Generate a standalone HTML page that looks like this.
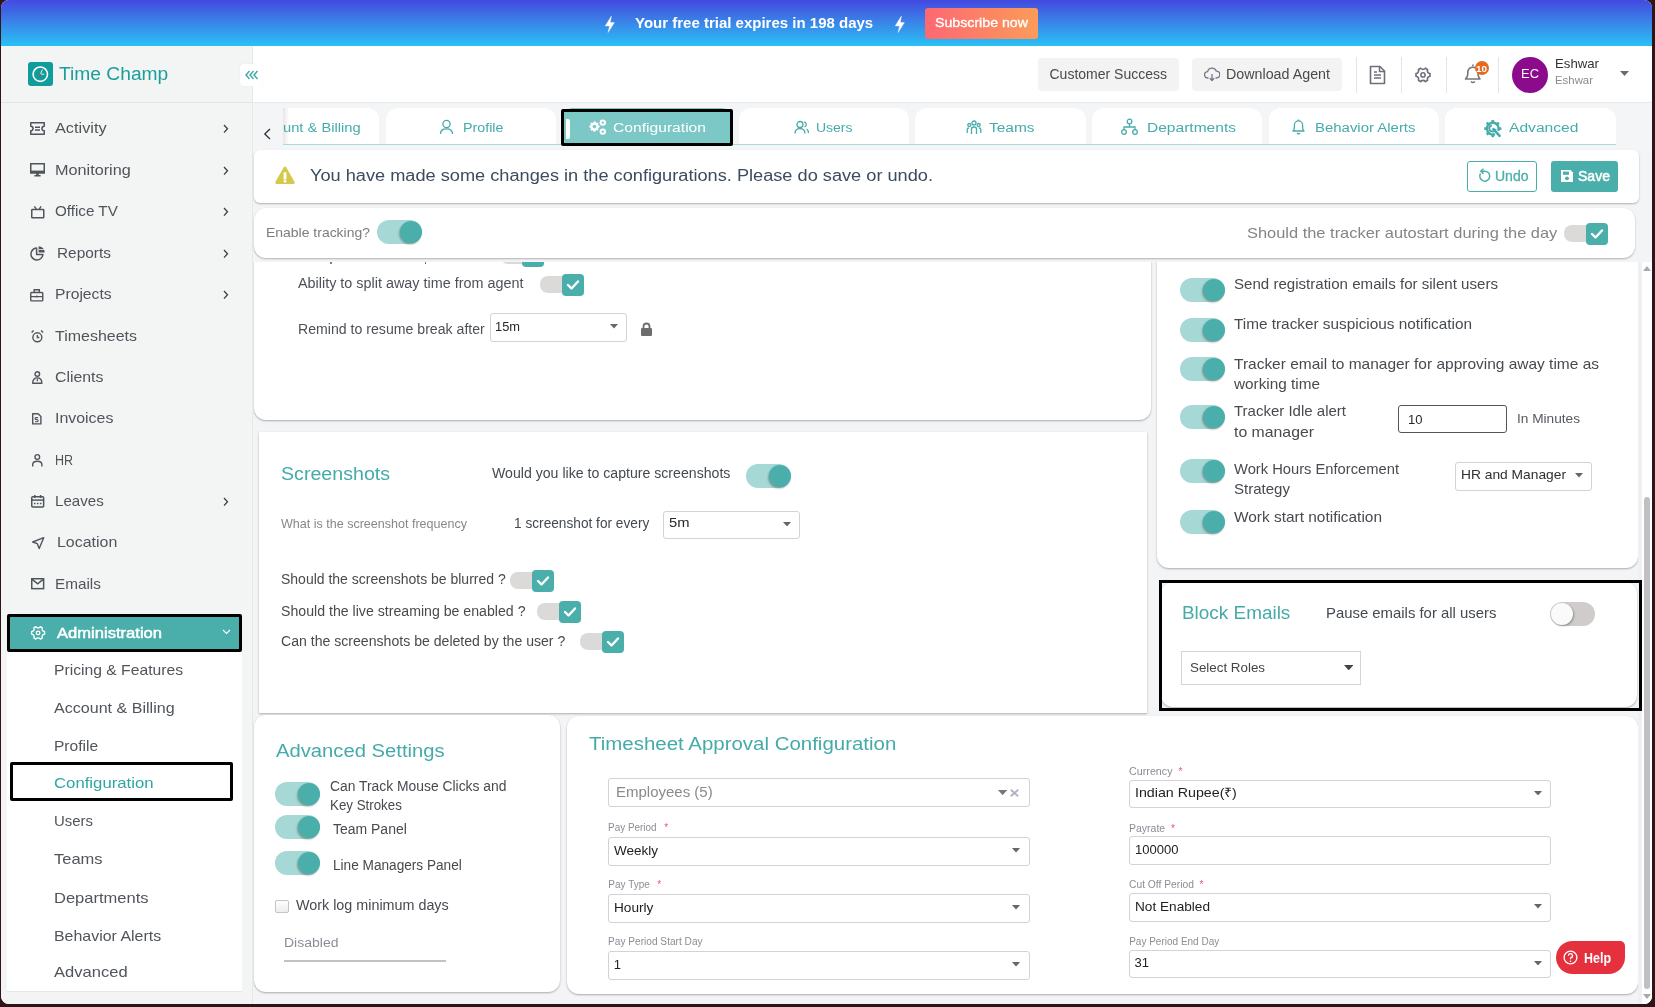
<!DOCTYPE html>
<html><head><meta charset="utf-8"><title>Time Champ - Configuration</title>
<style>
html,body{margin:0;padding:0;width:1655px;height:1007px;overflow:hidden;background:#2f1517;}
body{position:relative;font-family:"Liberation Sans", sans-serif;}
</style></head><body>
<div id="win" style="position:absolute;left:1px;top:0;width:1651px;height:1004px;border-radius:8px;overflow:hidden;background:#f3f4f6;will-change:transform;">
<div style="position:absolute;left:-1px;top:0;width:1655px;height:1007px;">
<div style="position:absolute;left:0px;top:0px;width:1655px;height:46px;background:linear-gradient(180deg,#4349e0 0%,#3a86e8 50%,#29c1f5 100%);"></div>
<svg style="position:absolute;left:604.8px;top:15.5px;" width="10" height="17" viewBox="0 0 10 17" fill="none"><path d="M6.4 0 L0.2 9.9 H4.5 L3.1 16.5 L9.4 6.6 H5.3 Z" fill="#fff" stroke="#fff" stroke-width="0.4" stroke-linejoin="round"/></svg>
<svg style="position:absolute;left:894.5px;top:15.5px;" width="10" height="17" viewBox="0 0 10 17" fill="none"><path d="M6.4 0 L0.2 9.9 H4.5 L3.1 16.5 L9.4 6.6 H5.3 Z" fill="#fff" stroke="#fff" stroke-width="0.4" stroke-linejoin="round"/></svg>
<div id="t0" style="position:absolute;left:635.00px;top:14.60px;font-size:15px;line-height:15px;color:#fff;font-weight:700;letter-spacing:0.000px;white-space:nowrap;">Your free trial expires in 198 days</div>
<div style="position:absolute;left:925px;top:8px;width:113px;height:31px;border-radius:3px;background:linear-gradient(90deg,#fd6873,#fb9b59);"></div>
<div id="t1" style="position:absolute;left:935.00px;top:16.07px;font-size:13.5px;line-height:13.5px;color:#fff;font-weight:400;letter-spacing:0.000px;white-space:nowrap;transform:scaleX(1.0501);transform-origin:0 0;-webkit-text-stroke:0.35px #fff;">Subscribe now</div>
<div style="position:absolute;left:1px;top:46px;width:251px;height:958px;background:#f3f5f5;border-right:1px solid #e6e9ea;"></div>
<div style="position:absolute;left:1px;top:102px;width:251px;height:1px;background:#e3e6e7;"></div>
<div style="position:absolute;left:28px;top:62px;width:25px;height:24px;background:#109c9a;border-radius:3px;"></div>
<svg style="position:absolute;left:28px;top:62px;" width="25" height="24" viewBox="0 0 25 24" fill="none"><circle cx="12.3" cy="12.2" r="7.2" stroke="#fff" stroke-width="1.6"/><path d="M12.3 12.2 L14.4 7.6 M12.3 12.2 L16.2 12.2" stroke="#fff" stroke-width="0.9"/><circle cx="12.2" cy="12.4" r="1" fill="#e33"/></svg>
<div id="t2" style="position:absolute;left:59.20px;top:65.06px;font-size:18px;line-height:18px;color:#1b9e9b;font-weight:400;letter-spacing:0.000px;white-space:nowrap;transform:scaleX(1.0678);transform-origin:0 0;">Time Champ</div>
<div id="t3" style="position:absolute;left:55.30px;top:119.90px;font-size:15px;line-height:15px;color:#50555b;font-weight:400;letter-spacing:0.000px;white-space:nowrap;transform:scaleX(1.0860);transform-origin:0 0;">Activity</div>
<svg style="position:absolute;left:30px;top:122px;overflow:visible;" width="15" height="13" viewBox="0 0 15 13" fill="none"><path d="M0.75 0.75 H14.25 V4.2 A2.3 2.3 0 0 0 14.25 8.8 V12.25 H0.75 V8.8 A2.3 2.3 0 0 0 0.75 4.2 Z" stroke="#50555b" stroke-width="1.5" stroke-linejoin="round"/><path d="M5 5.2 H10 M5 8 H10" stroke="#50555b" stroke-width="1.4"/></svg>
<svg style="position:absolute;left:223px;top:123.6px;" width="6" height="10" viewBox="0 0 6 10" fill="none"><path d="M1 1 L4.5 4.8 L1 8.6" stroke="#3c4046" stroke-width="1.3"/></svg>
<div id="t4" style="position:absolute;left:55.30px;top:161.90px;font-size:15px;line-height:15px;color:#50555b;font-weight:400;letter-spacing:0.000px;white-space:nowrap;transform:scaleX(1.0807);transform-origin:0 0;">Monitoring</div>
<svg style="position:absolute;left:30px;top:163px;overflow:visible;" width="15" height="13.6" viewBox="0 0 15 13.6" fill="none"><rect x="0.75" y="0.75" width="13.5" height="9" stroke="#50555b" stroke-width="1.5"/><rect x="0" y="7.6" width="15" height="2.9" fill="#50555b"/><rect x="6.2" y="10" width="2.6" height="2.2" fill="#50555b"/><rect x="4.3" y="12" width="6.4" height="1.5" rx="0.5" fill="#50555b"/></svg>
<svg style="position:absolute;left:223px;top:165.6px;" width="6" height="10" viewBox="0 0 6 10" fill="none"><path d="M1 1 L4.5 4.8 L1 8.6" stroke="#3c4046" stroke-width="1.3"/></svg>
<div id="t5" style="position:absolute;left:55.30px;top:203.10px;font-size:15px;line-height:15px;color:#50555b;font-weight:400;letter-spacing:0.000px;white-space:nowrap;transform:scaleX(1.0132);transform-origin:0 0;">Office TV</div>
<svg style="position:absolute;left:30.5px;top:206px;overflow:visible;" width="13.5" height="12.5" viewBox="0 0 13.5 12.5" fill="none"><rect x="0.75" y="3.6" width="12" height="8.15" rx="0.6" stroke="#50555b" stroke-width="1.5"/><path d="M3.4 0.4 L5.4 3.4 M10.1 0.4 L8.1 3.4" stroke="#50555b" stroke-width="1.4"/></svg>
<svg style="position:absolute;left:223px;top:206.8px;" width="6" height="10" viewBox="0 0 6 10" fill="none"><path d="M1 1 L4.5 4.8 L1 8.6" stroke="#3c4046" stroke-width="1.3"/></svg>
<div id="t6" style="position:absolute;left:56.60px;top:244.90px;font-size:15px;line-height:15px;color:#50555b;font-weight:400;letter-spacing:0.000px;white-space:nowrap;transform:scaleX(1.0261);transform-origin:0 0;">Reports</div>
<svg style="position:absolute;left:30px;top:245.8px;overflow:visible;" width="15" height="14.2" viewBox="0 0 15 14.2" fill="none"><path d="M6.6 2 A6 6 0 1 0 12.9 8.6 H6.6 Z" stroke="#50555b" stroke-width="1.5" stroke-linejoin="round"/><path d="M8.6 0.3 A6.1 6.1 0 0 1 14.7 6.4 H8.6 Z" fill="#50555b"/><path d="M8.6 3.5 H14.5" stroke="#f3f5f5" stroke-width="0.8"/></svg>
<svg style="position:absolute;left:223px;top:248.60000000000002px;" width="6" height="10" viewBox="0 0 6 10" fill="none"><path d="M1 1 L4.5 4.8 L1 8.6" stroke="#3c4046" stroke-width="1.3"/></svg>
<div id="t7" style="position:absolute;left:55.30px;top:286.10px;font-size:15px;line-height:15px;color:#50555b;font-weight:400;letter-spacing:0.000px;white-space:nowrap;transform:scaleX(1.0445);transform-origin:0 0;">Projects</div>
<svg style="position:absolute;left:30.4px;top:289px;overflow:visible;" width="13.5" height="12.6" viewBox="0 0 13.5 12.6" fill="none"><rect x="0.75" y="3.5" width="12" height="8.35" rx="0.8" stroke="#50555b" stroke-width="1.4"/><path d="M4.2 3.5 V0.75 H9.3 V3.5 M0.75 7.6 H12.75" stroke="#50555b" stroke-width="1.4"/><path d="M6.75 6.6 V8.4" stroke="#50555b" stroke-width="1.2"/></svg>
<svg style="position:absolute;left:223px;top:289.8px;" width="6" height="10" viewBox="0 0 6 10" fill="none"><path d="M1 1 L4.5 4.8 L1 8.6" stroke="#3c4046" stroke-width="1.3"/></svg>
<div id="t8" style="position:absolute;left:55.30px;top:327.50px;font-size:15px;line-height:15px;color:#50555b;font-weight:400;letter-spacing:0.000px;white-space:nowrap;transform:scaleX(1.0652);transform-origin:0 0;">Timesheets</div>
<svg style="position:absolute;left:30.7px;top:329.8px;overflow:visible;" width="12.7" height="12.5" viewBox="0 0 12.7 12.5" fill="none"><circle cx="6.35" cy="7.3" r="4.5" stroke="#50555b" stroke-width="1.4"/><path d="M6.35 4.9 V7.5 H8.3" stroke="#50555b" stroke-width="1.4"/><path d="M0.6 2.6 L2.6 0.6 M12.1 2.6 L10.1 0.6" stroke="#50555b" stroke-width="1.4"/></svg>
<div id="t9" style="position:absolute;left:55.30px;top:368.90px;font-size:15px;line-height:15px;color:#50555b;font-weight:400;letter-spacing:0.000px;white-space:nowrap;transform:scaleX(1.0554);transform-origin:0 0;">Clients</div>
<svg style="position:absolute;left:31.8px;top:371px;overflow:visible;" width="10.6" height="12.9" viewBox="0 0 10.6 12.9" fill="none"><circle cx="5.3" cy="3" r="2.3" stroke="#50555b" stroke-width="1.4"/><path d="M0.7 12.2 Q0.8 6.9 5.3 6.9 Q9.8 6.9 9.9 12.2 Z" stroke="#50555b" stroke-width="1.4" stroke-linejoin="round"/><path d="M5.3 7 L4.4 9.6 L5.3 10.6 L6.2 9.6 Z" fill="#50555b"/></svg>
<div id="t10" style="position:absolute;left:55.30px;top:410.10px;font-size:15px;line-height:15px;color:#50555b;font-weight:400;letter-spacing:0.000px;white-space:nowrap;transform:scaleX(1.0612);transform-origin:0 0;">Invoices</div>
<svg style="position:absolute;left:32.3px;top:413.3px;overflow:visible;" width="9.6" height="11.6" viewBox="0 0 9.6 11.6" fill="none"><path d="M0.7 0.7 H6.1 L8.9 3.4 V10.9 H0.7 Z" stroke="#50555b" stroke-width="1.4" stroke-linejoin="round"/><path d="M6.1 4.6 H4.1 Q3 4.6 3 5.6 Q3 6.6 4.6 6.6 Q6.2 6.6 6.2 7.6 Q6.2 8.7 5.1 8.7 H3" stroke="#50555b" stroke-width="1.1"/></svg>
<div id="t11" style="position:absolute;left:55.30px;top:451.50px;font-size:15px;line-height:15px;color:#50555b;font-weight:400;letter-spacing:0.000px;white-space:nowrap;transform:scaleX(0.8352);transform-origin:0 0;">HR</div>
<svg style="position:absolute;left:31.8px;top:454px;overflow:visible;" width="10.6" height="12.4" viewBox="0 0 10.6 12.4" fill="none"><circle cx="5.3" cy="3" r="2.35" stroke="#50555b" stroke-width="1.4"/><path d="M0.7 12.4 V10.6 Q0.7 7.3 5.3 7.3 Q9.9 7.3 9.9 10.6 V12.4" stroke="#50555b" stroke-width="1.4"/></svg>
<div id="t12" style="position:absolute;left:55.30px;top:492.90px;font-size:15px;line-height:15px;color:#50555b;font-weight:400;letter-spacing:0.000px;white-space:nowrap;transform:scaleX(1.0067);transform-origin:0 0;">Leaves</div>
<svg style="position:absolute;left:30.6px;top:494.9px;overflow:visible;" width="13.4" height="12.8" viewBox="0 0 13.4 12.8" fill="none"><rect x="0.75" y="1.8" width="11.9" height="10.25" rx="1" stroke="#50555b" stroke-width="1.5"/><path d="M0.75 5.1 H12.65" stroke="#50555b" stroke-width="1.5"/><path d="M3.8 0 V3 M9.6 0 V3" stroke="#50555b" stroke-width="1.5"/><path d="M2.9 8.4 H4.5 M5.9 8.4 H7.5 M8.9 8.4 H10.5" stroke="#50555b" stroke-width="1.5"/></svg>
<svg style="position:absolute;left:223px;top:496.6px;" width="6" height="10" viewBox="0 0 6 10" fill="none"><path d="M1 1 L4.5 4.8 L1 8.6" stroke="#3c4046" stroke-width="1.3"/></svg>
<div id="t13" style="position:absolute;left:57.10px;top:534.30px;font-size:15px;line-height:15px;color:#50555b;font-weight:400;letter-spacing:0.000px;white-space:nowrap;transform:scaleX(1.0631);transform-origin:0 0;">Location</div>
<svg style="position:absolute;left:32.1px;top:536.9px;overflow:visible;" width="12.4" height="12.2" viewBox="0 0 12.4 12.2" fill="none"><path d="M11.7 0.7 L0.7 5 L5.3 6.7 L7.2 11.5 Z" stroke="#50555b" stroke-width="1.4" stroke-linejoin="round"/></svg>
<div id="t14" style="position:absolute;left:55.30px;top:575.90px;font-size:15px;line-height:15px;color:#50555b;font-weight:400;letter-spacing:0.000px;white-space:nowrap;transform:scaleX(1.0196);transform-origin:0 0;">Emails</div>
<svg style="position:absolute;left:30.6px;top:578.2px;overflow:visible;" width="13.4" height="11.4" viewBox="0 0 13.4 11.4" fill="none"><rect x="0.75" y="0.75" width="11.9" height="9.9" stroke="#50555b" stroke-width="1.5"/><path d="M0.9 1.1 L6.7 5.9 L12.5 1.1" stroke="#50555b" stroke-width="1.5"/></svg>
<div style="position:absolute;left:7px;top:652px;width:235px;height:339px;background:#fff;border-bottom:1px solid #e5e8ea;"></div>
<div style="position:absolute;left:7px;top:614px;width:235px;height:38px;background:#4aafab;box-sizing:border-box;border:3px solid #000;border-radius:2px;"></div>
<svg style="position:absolute;left:30px;top:625px;overflow:visible;" width="17" height="16" viewBox="0 0 17 16" fill="none"><path d="M14.60 6.75 L14.60 9.05 Q11.30 9.75 12.34 12.96 L10.36 14.10 Q8.10 11.60 5.84 14.10 L3.86 12.96 Q4.90 9.75 1.60 9.05 L1.60 6.75 Q4.90 6.05 3.86 2.84 L5.84 1.70 Q8.10 4.20 10.36 1.70 L12.34 2.84 Q11.30 6.05 14.60 6.75 Z" stroke="#fff" stroke-width="1.35" stroke-linejoin="round"/><circle cx="8.1" cy="7.9" r="1.8" stroke="#fff" stroke-width="1.3"/></svg>
<div id="t15" style="position:absolute;left:57.00px;top:624.50px;font-size:15px;line-height:15px;color:#fff;font-weight:400;letter-spacing:0.000px;white-space:nowrap;transform:scaleX(1.1047);transform-origin:0 0;-webkit-text-stroke:0.5px #fff;">Administration</div>
<svg style="position:absolute;left:222px;top:629px;" width="9" height="6" viewBox="0 0 9 6" fill="none"><path d="M1 1 L4.5 4.5 L8 1" stroke="#fff" stroke-width="1.1"/></svg>
<div id="t16" style="position:absolute;left:54.00px;top:662.30px;font-size:15px;line-height:15px;color:#50555b;font-weight:400;letter-spacing:0.000px;white-space:nowrap;transform:scaleX(1.0455);transform-origin:0 0;">Pricing &amp; Features</div>
<div id="t17" style="position:absolute;left:54.00px;top:700.30px;font-size:15px;line-height:15px;color:#50555b;font-weight:400;letter-spacing:0.000px;white-space:nowrap;transform:scaleX(1.0714);transform-origin:0 0;">Account &amp; Billing</div>
<div id="t18" style="position:absolute;left:54.00px;top:738.00px;font-size:15px;line-height:15px;color:#50555b;font-weight:400;letter-spacing:0.000px;white-space:nowrap;transform:scaleX(1.0369);transform-origin:0 0;">Profile</div>
<div id="t19" style="position:absolute;left:54.00px;top:775.30px;font-size:15px;line-height:15px;color:#2ea6a2;font-weight:400;letter-spacing:0.000px;white-space:nowrap;transform:scaleX(1.1162);transform-origin:0 0;">Configuration</div>
<div id="t20" style="position:absolute;left:54.00px;top:813.30px;font-size:15px;line-height:15px;color:#50555b;font-weight:400;letter-spacing:0.000px;white-space:nowrap;transform:scaleX(0.9956);transform-origin:0 0;">Users</div>
<div id="t21" style="position:absolute;left:54.00px;top:851.30px;font-size:15px;line-height:15px;color:#50555b;font-weight:400;letter-spacing:0.000px;white-space:nowrap;transform:scaleX(1.0999);transform-origin:0 0;">Teams</div>
<div id="t22" style="position:absolute;left:54.00px;top:889.50px;font-size:15px;line-height:15px;color:#50555b;font-weight:400;letter-spacing:0.000px;white-space:nowrap;transform:scaleX(1.1016);transform-origin:0 0;">Departments</div>
<div id="t23" style="position:absolute;left:54.00px;top:927.70px;font-size:15px;line-height:15px;color:#50555b;font-weight:400;letter-spacing:0.000px;white-space:nowrap;transform:scaleX(1.0615);transform-origin:0 0;">Behavior Alerts</div>
<div id="t24" style="position:absolute;left:54.00px;top:964.10px;font-size:15px;line-height:15px;color:#50555b;font-weight:400;letter-spacing:0.000px;white-space:nowrap;transform:scaleX(1.1031);transform-origin:0 0;">Advanced</div>
<div style="position:absolute;left:10px;top:762px;width:223px;height:39px;box-sizing:border-box;border:3px solid #000;border-radius:2px;"></div>
<div style="position:absolute;left:253px;top:46px;width:1399px;height:57px;background:#fff;border-bottom:1px solid #e7e9eb;box-sizing:border-box;"></div>
<div style="position:absolute;left:1038px;top:58px;width:141px;height:33px;background:#f3f3f3;border-radius:4px;"></div>
<div id="t25" style="position:absolute;left:1049.50px;top:66.65px;font-size:14px;line-height:14px;color:#4a4a4a;font-weight:400;letter-spacing:0.000px;white-space:nowrap;">Customer Success</div>
<div style="position:absolute;left:1192px;top:58px;width:150px;height:33px;background:#f3f3f3;border-radius:4px;"></div>
<svg style="position:absolute;left:1204px;top:66px;" width="16" height="16" viewBox="0 0 16 16" fill="none"><path d="M4.5 12 H3.8 A3.2 3.2 0 0 1 3.6 5.6 A4.6 4.6 0 0 1 12.4 5.2 A3.4 3.4 0 0 1 12.4 12 H11.5" stroke="#767888" stroke-width="1.3"/><path d="M8 8 V14.5 M5.8 12.3 L8 14.5 L10.2 12.3" stroke="#767888" stroke-width="1.3"/></svg>
<div id="t26" style="position:absolute;left:1225.50px;top:66.65px;font-size:14px;line-height:14px;color:#4a4a4a;font-weight:400;letter-spacing:0.000px;white-space:nowrap;transform:scaleX(1.0199);transform-origin:0 0;">Download Agent</div>
<div style="position:absolute;left:1356px;top:57px;width:1px;height:36px;background:#e2e4e6;"></div>
<div style="position:absolute;left:1401px;top:57px;width:1px;height:36px;background:#e2e4e6;"></div>
<div style="position:absolute;left:1446px;top:57px;width:1px;height:36px;background:#e2e4e6;"></div>
<div style="position:absolute;left:1498px;top:57px;width:1px;height:36px;background:#e2e4e6;"></div>
<svg style="position:absolute;left:1368px;top:65px;" width="20" height="20" viewBox="0 0 20 20" fill="none"><path d="M2.5 1.5 H12 L16.5 6 V18.5 H2.5 Z" stroke="#6f6f7a" stroke-width="1.6" stroke-linejoin="round"/><path d="M11.5 1.5 V6.5 H16.5 M6 10 H13 M6 13 H13 M6 7 H9" stroke="#6f6f7a" stroke-width="1.5"/></svg>
<svg style="position:absolute;left:1412px;top:64px;overflow:visible;" width="22" height="22" viewBox="0 0 22 22" fill="none"><path d="M17.99 9.67 L17.99 12.13 Q14.64 13.00 15.56 16.34 L13.43 17.57 Q11.00 15.10 8.57 17.57 L6.44 16.34 Q7.36 13.00 4.01 12.13 L4.01 9.67 Q7.36 8.80 6.44 5.46 L8.57 4.23 Q11.00 6.70 13.43 4.23 L15.56 5.46 Q14.64 8.80 17.99 9.67 Z" stroke="#707080" stroke-width="1.7" stroke-linejoin="round"/><circle cx="11" cy="10.9" r="2.1" stroke="#707080" stroke-width="1.6"/></svg>
<svg style="position:absolute;left:1462px;top:62px;" width="22" height="24" viewBox="0 0 22 24" fill="none"><path d="M3.5 17 H18 Q16 15 16 12 V9.5 A5.2 5.2 0 0 0 5.8 9.5 V12 Q5.8 15 3.5 17 Z" stroke="#75757d" stroke-width="1.6" stroke-linejoin="round"/><path d="M9 19.5 Q10.9 21.5 12.8 19.5" stroke="#75757d" stroke-width="1.6"/><path d="M10.9 2.5 V4.3" stroke="#75757d" stroke-width="1.6"/></svg>
<div style="position:absolute;left:1475px;top:61px;width:14px;height:14px;background:#e26b1f;border-radius:50%;"></div>
<div id="t27" style="position:absolute;left:1476.20px;top:63.76px;font-size:9.5px;line-height:9.5px;color:#fff;font-weight:700;letter-spacing:0.000px;white-space:nowrap;transform:scaleX(1.0399);transform-origin:0 0;">10</div>
<div style="position:absolute;left:1512px;top:57px;width:36px;height:36px;background:#8c0a8c;border-radius:50%;"></div>
<div id="t28" style="position:absolute;left:1521.00px;top:68.42px;font-size:12.5px;line-height:12.5px;color:#fff;font-weight:400;letter-spacing:0.000px;white-space:nowrap;transform:scaleX(1.0360);transform-origin:0 0;">EC</div>
<div id="t29" style="position:absolute;left:1555.00px;top:56.80px;font-size:13px;line-height:13px;color:#333;font-weight:400;letter-spacing:0.000px;white-space:nowrap;transform:scaleX(1.0148);transform-origin:0 0;">Eshwar</div>
<div id="t30" style="position:absolute;left:1555.00px;top:74.87px;font-size:11.5px;line-height:11.5px;color:#8a8a92;font-weight:400;letter-spacing:0.000px;white-space:nowrap;transform:scaleX(0.9906);transform-origin:0 0;">Eshwar</div>
<svg style="position:absolute;left:1620px;top:71px;" width="9" height="5" viewBox="0 0 9 5" fill="none"><path d="M0 0 H9 L4.5 5 Z" fill="#6b6b73"/></svg>
<div style="position:absolute;left:240px;top:64px;width:23px;height:22px;background:#fff;border-radius:4px;box-shadow:0 0 2px rgba(0,0,0,.06);"></div>
<svg style="position:absolute;left:245px;top:70px;" width="14" height="10" viewBox="0 0 14 10" fill="none"><path d="M4.5 1 L1 5 L4.5 9 M8.5 1 L5 5 L8.5 9 M12.5 1 L9 5 L12.5 9" stroke="#3aa7a4" stroke-width="1.4"/></svg>
<div style="position:absolute;left:253px;top:103px;width:1399px;height:47px;background:#f3f5f6;"></div>
<svg style="position:absolute;left:263px;top:128px;" width="9" height="12" viewBox="0 0 9 12" fill="none"><path d="M7 1 L1.8 6 L7 11" stroke="#333" stroke-width="1.3"/></svg>
<div style="position:absolute;left:283px;top:103px;width:1360px;height:45px;overflow:hidden;"><div style="position:absolute;left:-283px;top:-103px;width:1655px;height:200px;">
<div style="position:absolute;left:208.9px;top:108px;width:170.5px;height:36px;background:#fff;border-radius:12px 12px 0 0;"></div>
<div style="position:absolute;left:385.5px;top:108px;width:170.5px;height:36px;background:#fff;border-radius:12px 12px 0 0;"></div>
<div style="position:absolute;left:738.7px;top:108px;width:170.5px;height:36px;background:#fff;border-radius:12px 12px 0 0;"></div>
<div style="position:absolute;left:915.3px;top:108px;width:170.5px;height:36px;background:#fff;border-radius:12px 12px 0 0;"></div>
<div style="position:absolute;left:1091.9px;top:108px;width:170.5px;height:36px;background:#fff;border-radius:12px 12px 0 0;"></div>
<div style="position:absolute;left:1268.5px;top:108px;width:170.5px;height:36px;background:#fff;border-radius:12px 12px 0 0;"></div>
<div style="position:absolute;left:1445.1px;top:108px;width:170.5px;height:36px;background:#fff;border-radius:12px 12px 0 0;"></div>
<div style="position:absolute;left:283px;top:144px;width:1333px;height:1px;background:#a9dbd8;"></div>
</div></div>
<div style="position:absolute;left:283px;top:108px;width:6px;height:36px;background:linear-gradient(90deg,rgba(0,0,0,.10),rgba(0,0,0,0));"></div>
<div id="t31" style="position:absolute;left:283.00px;top:120.60px;font-size:13.7px;line-height:13.7px;color:#45aca9;font-weight:400;letter-spacing:0.000px;white-space:nowrap;transform:scaleX(1.0750);transform-origin:0 0;">unt &amp; Billing</div>
<div id="t32" style="position:absolute;left:462.60px;top:120.90px;font-size:13.7px;line-height:13.7px;color:#45aca9;font-weight:400;letter-spacing:0.000px;white-space:nowrap;transform:scaleX(1.0413);transform-origin:0 0;">Profile</div>
<svg style="position:absolute;left:439px;top:119px;" width="15" height="16" viewBox="0 0 15 16" fill="none"><circle cx="7.5" cy="5" r="3.6" stroke="#45aca9" stroke-width="1.3"/><path d="M1.5 15 Q1.5 9.8 7.5 9.8 Q13.5 9.8 13.5 15" stroke="#45aca9" stroke-width="1.3"/></svg>
<div style="position:absolute;left:561px;top:108px;width:172px;height:37px;background:#7cc8c6;border-radius:12px 12px 0 0;"></div>
<div style="position:absolute;left:561px;top:109px;width:172px;height:37px;background:#7cc8c6;box-sizing:border-box;border:3px solid #000;border-radius:2px;"></div>
<div style="position:absolute;left:565.5px;top:119px;width:4px;height:20px;background:#fff;border-radius:0 2px 2px 0;"></div>
<svg style="position:absolute;left:587px;top:118px;" width="21" height="18" viewBox="0 0 21 18" fill="none"><g fill="#fff"><path d="M7 3.2 L8.6 3.5 L9 5 L10.4 4.4 L11.6 5.5 L11 7 L12.5 7.6 L12.6 9.2 L11.1 9.9 L11.6 11.4 L10.5 12.6 L9 12 L8.3 13.5 L6.7 13.7 L6 12.2 L4.5 12.7 L3.4 11.6 L3.9 10.1 L2.4 9.4 L2.3 7.8 L3.8 7.2 L3.3 5.7 L4.4 4.5 L5.9 5.1 Z"/><circle cx="15.8" cy="4.6" r="3.2"/><circle cx="15.8" cy="13.6" r="3.2"/></g><circle cx="7.4" cy="8.6" r="1.8" fill="#7cc8c6"/><circle cx="15.8" cy="4.6" r="1.2" fill="#7cc8c6"/><circle cx="15.8" cy="13.6" r="1.2" fill="#7cc8c6"/></svg>
<div id="t33" style="position:absolute;left:613.00px;top:120.90px;font-size:13.7px;line-height:13.7px;color:#fff;font-weight:400;letter-spacing:0.000px;white-space:nowrap;transform:scaleX(1.1422);transform-origin:0 0;">Configuration</div>
<div id="t34" style="position:absolute;left:816.00px;top:120.90px;font-size:13.7px;line-height:13.7px;color:#45aca9;font-weight:400;letter-spacing:0.000px;white-space:nowrap;transform:scaleX(1.0210);transform-origin:0 0;">Users</div>
<svg style="position:absolute;left:794px;top:120px;" width="15" height="15" viewBox="0 0 15 15" fill="none"><circle cx="6" cy="4.5" r="3" stroke="#45aca9" stroke-width="1.3"/><path d="M1 13.5 Q1 8.6 6 8.6 Q11 8.6 11 13.5 M10 1.8 A2.7 2.7 0 0 1 10.5 7 M12.5 9 Q14.5 10 14.5 13" stroke="#45aca9" stroke-width="1.3"/></svg>
<div id="t35" style="position:absolute;left:989.00px;top:120.90px;font-size:13.7px;line-height:13.7px;color:#45aca9;font-weight:400;letter-spacing:0.000px;white-space:nowrap;transform:scaleX(1.1307);transform-origin:0 0;">Teams</div>
<svg style="position:absolute;left:966px;top:119px;" width="16" height="16" viewBox="0 0 16 16" fill="none"><circle cx="8" cy="4" r="2" stroke="#45aca9" stroke-width="1.3"/><circle cx="3.3" cy="6" r="1.5" stroke="#45aca9" stroke-width="1.3"/><circle cx="12.7" cy="6" r="1.5" stroke="#45aca9" stroke-width="1.3"/><path d="M5.5 15 V10 Q5.5 8 8 8 Q10.5 8 10.5 10 V15 M1.2 14 V10.5 Q1.2 9 3 9 M14.8 14 V10.5 Q14.8 9 13 9" stroke="#45aca9" stroke-width="1.3"/></svg>
<div id="t36" style="position:absolute;left:1147.00px;top:120.90px;font-size:13.7px;line-height:13.7px;color:#45aca9;font-weight:400;letter-spacing:0.000px;white-space:nowrap;transform:scaleX(1.1358);transform-origin:0 0;">Departments</div>
<svg style="position:absolute;left:1121px;top:118px;" width="17" height="17" viewBox="0 0 17 17" fill="none"><circle cx="8.5" cy="3.5" r="2.3" stroke="#45aca9" stroke-width="1.3"/><circle cx="3" cy="14" r="2.3" stroke="#45aca9" stroke-width="1.3"/><circle cx="14" cy="14" r="2.3" stroke="#45aca9" stroke-width="1.3"/><path d="M8.5 6 V9 M3 11.7 V9 H14 V11.7" stroke="#45aca9" stroke-width="1.3"/></svg>
<div id="t37" style="position:absolute;left:1315.00px;top:120.90px;font-size:13.7px;line-height:13.7px;color:#45aca9;font-weight:400;letter-spacing:0.000px;white-space:nowrap;transform:scaleX(1.0916);transform-origin:0 0;">Behavior Alerts</div>
<svg style="position:absolute;left:1291px;top:118px;" width="15" height="17" viewBox="0 0 15 17" fill="none"><path d="M2 13 H13 Q11.6 11.5 11.6 9.5 V7 A4.1 4.1 0 0 0 3.4 7 V9.5 Q3.4 11.5 2 13 Z" stroke="#45aca9" stroke-width="1.3" stroke-linejoin="round"/><path d="M6 15 Q7.5 16.5 9 15 M7.5 1.5 V2.8" stroke="#45aca9" stroke-width="1.3"/></svg>
<div id="t38" style="position:absolute;left:1509.00px;top:120.90px;font-size:13.7px;line-height:13.7px;color:#45aca9;font-weight:400;letter-spacing:0.000px;white-space:nowrap;transform:scaleX(1.1397);transform-origin:0 0;">Advanced</div>
<svg style="position:absolute;left:1484px;top:119.5px;overflow:visible;" width="18" height="18" viewBox="0 0 18 18" fill="none"><path d="M11.01 14.07 A5.9 5.9 0 1 1 14.27 10.81" stroke="#45aca9" stroke-width="2.3"/><rect x="14.80" y="7.30" width="2.6" height="2.6" rx="0.4" transform="rotate(0 16.10 8.60)" fill="#45aca9"/><rect x="7.50" y="14.60" width="2.6" height="2.6" rx="0.4" transform="rotate(90 8.80 15.90)" fill="#45aca9"/><rect x="2.34" y="12.46" width="2.6" height="2.6" rx="0.4" transform="rotate(135 3.64 13.76)" fill="#45aca9"/><rect x="0.20" y="7.30" width="2.6" height="2.6" rx="0.4" transform="rotate(180 1.50 8.60)" fill="#45aca9"/><rect x="2.34" y="2.14" width="2.6" height="2.6" rx="0.4" transform="rotate(225 3.64 3.44)" fill="#45aca9"/><rect x="7.50" y="-0.00" width="2.6" height="2.6" rx="0.4" transform="rotate(270 8.80 1.30)" fill="#45aca9"/><rect x="12.66" y="2.14" width="2.6" height="2.6" rx="0.4" transform="rotate(315 13.96 3.44)" fill="#45aca9"/><path d="M9.40 9.20 L15.6 15.8" stroke="#45aca9" stroke-width="2.6" stroke-linecap="round"/><path d="M7.9 5.2 A3.2 3.2 0 1 0 11.6 8.9" stroke="#45aca9" stroke-width="1.9"/></svg>
<div style="position:absolute;left:254px;top:150px;width:1385px;height:53px;background:#fff;border-radius:6px;box-shadow:0 1px 2px rgba(0,0,0,.28);"></div>
<svg style="position:absolute;left:275px;top:166px;" width="20" height="18" viewBox="0 0 20 18" fill="none"><path d="M10 0.6 Q10.9 0.6 11.4 1.5 L19.6 15.9 Q20.2 17.9 18.4 17.9 H1.6 Q-0.2 17.9 0.4 15.9 L8.6 1.5 Q9.1 0.6 10 0.6 Z" fill="#d5c94b"/><rect x="8.6" y="6.2" width="2.8" height="7.4" rx="0.5" fill="#fff"/><circle cx="10" cy="15.3" r="1.4" fill="#fff"/></svg>
<div id="t39" style="position:absolute;left:310.40px;top:167.63px;font-size:15.8px;line-height:15.8px;color:#3c4b5e;font-weight:400;letter-spacing:0.000px;white-space:nowrap;transform:scaleX(1.1510);transform-origin:0 0;">You have made some changes in the configurations. Please do save or undo.</div>
<div style="position:absolute;left:1467px;top:161px;width:70px;height:31px;box-sizing:border-box;border:1px solid #4aafab;border-radius:3px;background:#fff;"></div>
<svg style="position:absolute;left:1477px;top:168px;" width="14" height="15" viewBox="0 0 14 15" fill="none"><path d="M3.5 5.5 A5 5 0 1 0 7 3.2 H5" stroke="#4aafab" stroke-width="1.5"/><path d="M6.5 0.8 L3.8 3.2 L6.5 5.6" stroke="#4aafab" stroke-width="1.5"/></svg>
<div id="t40" style="position:absolute;left:1495.00px;top:169.15px;font-size:14px;line-height:14px;color:#4aafab;font-weight:400;letter-spacing:0.000px;white-space:nowrap;-webkit-text-stroke:0.3px #4aafab;">Undo</div>
<div style="position:absolute;left:1551px;top:161px;width:67px;height:31px;background:#4aafab;border-radius:3px;"></div>
<svg style="position:absolute;left:1560px;top:169px;" width="14" height="14" viewBox="0 0 14 14" fill="none"><path d="M1 1 H10.5 L13 3.5 V13 H1 Z" fill="#fff"/><rect x="3" y="2.6" width="6" height="3.2" fill="#4aafab"/><circle cx="7" cy="9.3" r="1.9" fill="#4aafab"/></svg>
<div id="t41" style="position:absolute;left:1578.00px;top:169.15px;font-size:14px;line-height:14px;color:#fff;font-weight:400;letter-spacing:0.000px;white-space:nowrap;transform:scaleX(1.0024);transform-origin:0 0;-webkit-text-stroke:0.5px #fff;">Save</div>
<div style="position:absolute;left:254px;top:208px;width:1381px;height:50px;background:#fff;border-radius:12px;box-shadow:0 1px 2px rgba(0,0,0,.28);"></div>
<div id="t42" style="position:absolute;left:265.50px;top:226.20px;font-size:13px;line-height:13px;color:#7c7c7c;font-weight:400;letter-spacing:0.000px;white-space:nowrap;transform:scaleX(1.0739);transform-origin:0 0;">Enable tracking?</div>
<div style="position:absolute;left:377px;top:220px;width:45px;height:24px;background:#a6d8d5;border-radius:12.0px;"></div>
<div style="position:absolute;left:400px;top:220.5px;width:22px;height:22px;background:#4aafab;border-radius:50%;box-shadow:-1px 1.5px 2px rgba(0,0,0,.28);"></div>
<div id="t43" style="position:absolute;left:1246.70px;top:225.30px;font-size:15px;line-height:15px;color:#858585;font-weight:400;letter-spacing:0.000px;white-space:nowrap;transform:scaleX(1.0945);transform-origin:0 0;">Should the tracker autostart during the day</div>
<div style="position:absolute;left:1564px;top:225px;width:40px;height:17px;background:#dcd9d9;border-radius:8px;"></div>
<div style="position:absolute;left:1586px;top:223px;width:22px;height:22px;background:#4aafab;border-radius:4px;"></div>
<svg style="position:absolute;left:1586px;top:223px;" width="22" height="22" viewBox="0 0 22 22" fill="none"><path d="M6 11 L9.5 14.5 L16 7.5" stroke="#fff" stroke-width="2.4" stroke-linecap="round" stroke-linejoin="round"/></svg>
<div style="position:absolute;left:253px;top:262px;width:1399px;height:742px;overflow:hidden;"><div style="position:absolute;left:-253px;top:-262px;width:1655px;height:1007px;">
<div style="position:absolute;left:253px;top:262px;width:1399px;height:742px;background:#f3f4f6;"></div>
<div style="position:absolute;left:254px;top:100px;width:897px;height:320px;background:#fff;border-radius:12px;box-shadow:0 1px 2px rgba(0,0,0,.3);"></div>
<div style="position:absolute;left:500px;top:247px;width:40px;height:17px;background:#dcd9d9;border-radius:8px;"></div>
<div style="position:absolute;left:522px;top:245px;width:22px;height:22px;background:#4aafab;border-radius:4px;"></div>
<svg style="position:absolute;left:522px;top:245px;" width="22" height="22" viewBox="0 0 22 22" fill="none"><path d="M6 11 L9.5 14.5 L16 7.5" stroke="#fff" stroke-width="2.4" stroke-linecap="round" stroke-linejoin="round"/></svg>
<div id="t44" style="position:absolute;left:297.60px;top:276.15px;font-size:14px;line-height:14px;color:#4d5157;font-weight:400;letter-spacing:0.000px;white-space:nowrap;transform:scaleX(1.0272);transform-origin:0 0;">Ability to split away time from agent</div>
<div style="position:absolute;left:540px;top:276px;width:40px;height:17px;background:#dcd9d9;border-radius:8px;"></div>
<div style="position:absolute;left:562px;top:274px;width:22px;height:22px;background:#4aafab;border-radius:4px;"></div>
<svg style="position:absolute;left:562px;top:274px;" width="22" height="22" viewBox="0 0 22 22" fill="none"><path d="M6 11 L9.5 14.5 L16 7.5" stroke="#fff" stroke-width="2.4" stroke-linecap="round" stroke-linejoin="round"/></svg>
<div id="t45" style="position:absolute;left:297.60px;top:322.45px;font-size:14px;line-height:14px;color:#4d5157;font-weight:400;letter-spacing:0.000px;white-space:nowrap;transform:scaleX(1.0086);transform-origin:0 0;">Remind to resume break after</div>
<div style="position:absolute;left:490px;top:313px;width:137px;height:29px;box-sizing:border-box;border:1px solid #d7d0d4;border-radius:3px;background:#fff;"></div>
<div id="t46" style="position:absolute;left:495.00px;top:319.80px;font-size:13px;line-height:13px;color:#282828;font-weight:400;letter-spacing:0.000px;white-space:nowrap;transform:scaleX(0.9883);transform-origin:0 0;">15m</div>
<svg style="position:absolute;left:610.0px;top:324.0px;" width="8" height="4.5" viewBox="0 0 8 4.5" fill="none"><path d="M0 0 H8 L4 4.5 Z" fill="#666"/></svg>
<svg style="position:absolute;left:640px;top:322px;" width="13" height="14" viewBox="0 0 13 14" fill="none"><rect x="1" y="6" width="11" height="8" rx="1" fill="#6d6d6d"/><path d="M3.5 6.5 V4.5 A3 3 0 0 1 9.5 4.5 V6.5" stroke="#6d6d6d" stroke-width="1.8"/></svg>
<div style="position:absolute;left:259px;top:432px;width:888px;height:281px;background:#fff;box-shadow:0 1px 2px rgba(0,0,0,.3);"></div>
<div style="position:absolute;left:330px;top:262px;width:1.6px;height:1.6px;background:#555;border-radius:1px;"></div>
<div style="position:absolute;left:424.5px;top:262px;width:1.6px;height:1.6px;background:#555;border-radius:1px;"></div>
<div id="t47" style="position:absolute;left:281.00px;top:465.31px;font-size:18.3px;line-height:18.3px;color:#45aba8;font-weight:400;letter-spacing:0.000px;white-space:nowrap;transform:scaleX(1.0736);transform-origin:0 0;">Screenshots</div>
<div id="t48" style="position:absolute;left:491.80px;top:466.35px;font-size:14px;line-height:14px;color:#444a50;font-weight:400;letter-spacing:0.000px;white-space:nowrap;transform:scaleX(1.0088);transform-origin:0 0;">Would you like to capture screenshots</div>
<div style="position:absolute;left:746px;top:464px;width:45px;height:24px;background:#a6d8d5;border-radius:12.0px;"></div>
<div style="position:absolute;left:769px;top:464.5px;width:22px;height:22px;background:#4aafab;border-radius:50%;box-shadow:-1px 1.5px 2px rgba(0,0,0,.28);"></div>
<div id="t49" style="position:absolute;left:280.50px;top:517.40px;font-size:13px;line-height:13px;color:#86888c;font-weight:400;letter-spacing:0.000px;white-space:nowrap;transform:scaleX(0.9640);transform-origin:0 0;">What is the screenshot frequency</div>
<div id="t50" style="position:absolute;left:513.60px;top:516.35px;font-size:14px;line-height:14px;color:#444a50;font-weight:400;letter-spacing:0.000px;white-space:nowrap;transform:scaleX(0.9768);transform-origin:0 0;">1 screenshot for every</div>
<div style="position:absolute;left:663px;top:511px;width:137px;height:28px;box-sizing:border-box;border:1px solid #d7d0d4;border-radius:3px;background:#fff;"></div>
<div id="t51" style="position:absolute;left:668.50px;top:515.80px;font-size:13px;line-height:13px;color:#282828;font-weight:400;letter-spacing:0.000px;white-space:nowrap;transform:scaleX(1.1349);transform-origin:0 0;">5m</div>
<svg style="position:absolute;left:782.5px;top:521.5px;" width="8" height="4.5" viewBox="0 0 8 4.5" fill="none"><path d="M0 0 H8 L4 4.5 Z" fill="#666"/></svg>
<div id="t52" style="position:absolute;left:280.50px;top:572.35px;font-size:14px;line-height:14px;color:#484a4d;font-weight:400;letter-spacing:0.000px;white-space:nowrap;transform:scaleX(0.9989);transform-origin:0 0;">Should the screenshots be blurred ?</div>
<div style="position:absolute;left:510px;top:572px;width:40px;height:17px;background:#dcd9d9;border-radius:8px;"></div>
<div style="position:absolute;left:532px;top:570px;width:22px;height:22px;background:#4aafab;border-radius:4px;"></div>
<svg style="position:absolute;left:532px;top:570px;" width="22" height="22" viewBox="0 0 22 22" fill="none"><path d="M6 11 L9.5 14.5 L16 7.5" stroke="#fff" stroke-width="2.4" stroke-linecap="round" stroke-linejoin="round"/></svg>
<div id="t53" style="position:absolute;left:280.50px;top:603.95px;font-size:14px;line-height:14px;color:#484a4d;font-weight:400;letter-spacing:0.000px;white-space:nowrap;transform:scaleX(1.0101);transform-origin:0 0;">Should the live streaming be enabled ?</div>
<div style="position:absolute;left:537px;top:603px;width:40px;height:17px;background:#dcd9d9;border-radius:8px;"></div>
<div style="position:absolute;left:559px;top:601px;width:22px;height:22px;background:#4aafab;border-radius:4px;"></div>
<svg style="position:absolute;left:559px;top:601px;" width="22" height="22" viewBox="0 0 22 22" fill="none"><path d="M6 11 L9.5 14.5 L16 7.5" stroke="#fff" stroke-width="2.4" stroke-linecap="round" stroke-linejoin="round"/></svg>
<div id="t54" style="position:absolute;left:280.50px;top:633.75px;font-size:14px;line-height:14px;color:#484a4d;font-weight:400;letter-spacing:0.000px;white-space:nowrap;transform:scaleX(1.0063);transform-origin:0 0;">Can the screenshots be deleted by the user ?</div>
<div style="position:absolute;left:580px;top:633px;width:40px;height:17px;background:#dcd9d9;border-radius:8px;"></div>
<div style="position:absolute;left:602px;top:631px;width:22px;height:22px;background:#4aafab;border-radius:4px;"></div>
<svg style="position:absolute;left:602px;top:631px;" width="22" height="22" viewBox="0 0 22 22" fill="none"><path d="M6 11 L9.5 14.5 L16 7.5" stroke="#fff" stroke-width="2.4" stroke-linecap="round" stroke-linejoin="round"/></svg>
<div style="position:absolute;left:1157px;top:100px;width:481px;height:468px;background:#fff;border-radius:12px;box-shadow:0 1px 2px rgba(0,0,0,.3);"></div>
<div style="position:absolute;left:1180px;top:278px;width:45px;height:24px;background:#a6d8d5;border-radius:12.0px;"></div>
<div style="position:absolute;left:1203px;top:278.5px;width:22px;height:22px;background:#4aafab;border-radius:50%;box-shadow:-1px 1.5px 2px rgba(0,0,0,.28);"></div>
<div id="t55" style="position:absolute;left:1234.00px;top:275.70px;font-size:15px;line-height:15px;color:#474a4f;font-weight:400;letter-spacing:0.000px;white-space:nowrap;transform:scaleX(1.0052);transform-origin:0 0;">Send registration emails for silent users</div>
<div style="position:absolute;left:1180px;top:318px;width:45px;height:24px;background:#a6d8d5;border-radius:12.0px;"></div>
<div style="position:absolute;left:1203px;top:318.5px;width:22px;height:22px;background:#4aafab;border-radius:50%;box-shadow:-1px 1.5px 2px rgba(0,0,0,.28);"></div>
<div id="t56" style="position:absolute;left:1234.00px;top:315.70px;font-size:15px;line-height:15px;color:#474a4f;font-weight:400;letter-spacing:0.000px;white-space:nowrap;transform:scaleX(1.0220);transform-origin:0 0;">Time tracker suspicious notification</div>
<div style="position:absolute;left:1180px;top:357px;width:45px;height:24px;background:#a6d8d5;border-radius:12.0px;"></div>
<div style="position:absolute;left:1203px;top:357.5px;width:22px;height:22px;background:#4aafab;border-radius:50%;box-shadow:-1px 1.5px 2px rgba(0,0,0,.28);"></div>
<div id="t57" style="position:absolute;left:1234.00px;top:355.90px;font-size:15px;line-height:15px;color:#474a4f;font-weight:400;letter-spacing:0.000px;white-space:nowrap;transform:scaleX(1.0318);transform-origin:0 0;">Tracker email to manager for approving away time as</div>
<div id="t58" style="position:absolute;left:1234.00px;top:375.80px;font-size:15px;line-height:15px;color:#474a4f;font-weight:400;letter-spacing:0.000px;white-space:nowrap;transform:scaleX(1.0213);transform-origin:0 0;">working time</div>
<div style="position:absolute;left:1180px;top:405px;width:45px;height:24px;background:#a6d8d5;border-radius:12.0px;"></div>
<div style="position:absolute;left:1203px;top:405.5px;width:22px;height:22px;background:#4aafab;border-radius:50%;box-shadow:-1px 1.5px 2px rgba(0,0,0,.28);"></div>
<div id="t59" style="position:absolute;left:1234.00px;top:403.20px;font-size:15px;line-height:15px;color:#474a4f;font-weight:400;letter-spacing:0.000px;white-space:nowrap;">Tracker Idle alert</div>
<div id="t60" style="position:absolute;left:1234.00px;top:424.00px;font-size:15px;line-height:15px;color:#474a4f;font-weight:400;letter-spacing:0.000px;white-space:nowrap;transform:scaleX(1.0541);transform-origin:0 0;">to manager</div>
<div style="position:absolute;left:1398px;top:405px;width:109px;height:28px;box-sizing:border-box;border:1px solid #555;border-radius:3px;background:#fff;"></div>
<div id="t61" style="position:absolute;left:1408.00px;top:412.60px;font-size:13px;line-height:13px;color:#282828;font-weight:400;letter-spacing:0.000px;white-space:nowrap;">10</div>
<div id="t62" style="position:absolute;left:1516.60px;top:412.00px;font-size:13px;line-height:13px;color:#555a60;font-weight:400;letter-spacing:0.000px;white-space:nowrap;transform:scaleX(1.0503);transform-origin:0 0;">In Minutes</div>
<div style="position:absolute;left:1180px;top:459px;width:45px;height:24px;background:#a6d8d5;border-radius:12.0px;"></div>
<div style="position:absolute;left:1203px;top:459.5px;width:22px;height:22px;background:#4aafab;border-radius:50%;box-shadow:-1px 1.5px 2px rgba(0,0,0,.28);"></div>
<div id="t63" style="position:absolute;left:1234.00px;top:461.20px;font-size:15px;line-height:15px;color:#474a4f;font-weight:400;letter-spacing:0.000px;white-space:nowrap;transform:scaleX(0.9814);transform-origin:0 0;">Work Hours Enforcement</div>
<div id="t64" style="position:absolute;left:1234.00px;top:481.00px;font-size:15px;line-height:15px;color:#474a4f;font-weight:400;letter-spacing:0.000px;white-space:nowrap;transform:scaleX(1.0022);transform-origin:0 0;">Strategy</div>
<div style="position:absolute;left:1455px;top:462px;width:137px;height:29px;box-sizing:border-box;border:1px solid #d7d0d4;border-radius:3px;background:#fff;"></div>
<div id="t65" style="position:absolute;left:1460.80px;top:467.90px;font-size:13px;line-height:13px;color:#303030;font-weight:400;letter-spacing:0.000px;white-space:nowrap;transform:scaleX(1.0606);transform-origin:0 0;">HR and Manager</div>
<svg style="position:absolute;left:1575.0px;top:473.0px;" width="8" height="4.5" viewBox="0 0 8 4.5" fill="none"><path d="M0 0 H8 L4 4.5 Z" fill="#666"/></svg>
<div style="position:absolute;left:1180px;top:510px;width:45px;height:24px;background:#a6d8d5;border-radius:12.0px;"></div>
<div style="position:absolute;left:1203px;top:510.5px;width:22px;height:22px;background:#4aafab;border-radius:50%;box-shadow:-1px 1.5px 2px rgba(0,0,0,.28);"></div>
<div id="t66" style="position:absolute;left:1234.00px;top:509.10px;font-size:15px;line-height:15px;color:#474a4f;font-weight:400;letter-spacing:0.000px;white-space:nowrap;transform:scaleX(1.0281);transform-origin:0 0;">Work start notification</div>
<div style="position:absolute;left:1161px;top:582px;width:476px;height:125px;background:#fff;border-radius:12px;box-shadow:0 1px 2px rgba(0,0,0,.3);"></div>
<div id="t67" style="position:absolute;left:1182.30px;top:604.11px;font-size:18.3px;line-height:18.3px;color:#45aba8;font-weight:400;letter-spacing:0.000px;white-space:nowrap;transform:scaleX(1.0350);transform-origin:0 0;">Block Emails</div>
<div id="t68" style="position:absolute;left:1326.00px;top:605.73px;font-size:14.5px;line-height:14.5px;color:#444a50;font-weight:400;letter-spacing:0.000px;white-space:nowrap;transform:scaleX(1.0264);transform-origin:0 0;">Pause emails for all users</div>
<div style="position:absolute;left:1550px;top:602px;width:45px;height:24px;background:#d0cccc;border-radius:12px;"></div>
<div style="position:absolute;left:1551px;top:603px;width:22px;height:22px;background:#fafafa;border-radius:50%;box-shadow:1px 1px 2px rgba(0,0,0,.3);"></div>
<div style="position:absolute;left:1181px;top:651px;width:180px;height:34px;box-sizing:border-box;border:1px solid #d5d5d5;border-radius:0px;background:#fff;"></div>
<div id="t69" style="position:absolute;left:1189.70px;top:661.00px;font-size:13px;line-height:13px;color:#444;font-weight:400;letter-spacing:0.000px;white-space:nowrap;transform:scaleX(1.0276);transform-origin:0 0;">Select Roles</div>
<svg style="position:absolute;left:1343.5px;top:665px;" width="9.5" height="5.4" viewBox="0 0 9.5 5.4" fill="none"><path d="M0 0 H9.5 L4.75 5.4 Z" fill="#444"/></svg>
<div style="position:absolute;left:254px;top:715px;width:306px;height:277px;background:#fff;border-radius:12px;box-shadow:0 1px 2px rgba(0,0,0,.3);"></div>
<div id="t70" style="position:absolute;left:276.00px;top:741.71px;font-size:18.3px;line-height:18.3px;color:#45aba8;font-weight:400;letter-spacing:0.000px;white-space:nowrap;transform:scaleX(1.1059);transform-origin:0 0;">Advanced Settings</div>
<div style="position:absolute;left:275px;top:782px;width:45px;height:24px;background:#a6d8d5;border-radius:12.0px;"></div>
<div style="position:absolute;left:298px;top:782.5px;width:22px;height:22px;background:#4aafab;border-radius:50%;box-shadow:-1px 1.5px 2px rgba(0,0,0,.28);"></div>
<div id="t71" style="position:absolute;left:329.60px;top:779.25px;font-size:14px;line-height:14px;color:#474a4f;font-weight:400;letter-spacing:0.000px;white-space:nowrap;transform:scaleX(0.9900);transform-origin:0 0;">Can Track Mouse Clicks and</div>
<div id="t72" style="position:absolute;left:329.60px;top:797.85px;font-size:14px;line-height:14px;color:#474a4f;font-weight:400;letter-spacing:0.000px;white-space:nowrap;transform:scaleX(0.9512);transform-origin:0 0;">Key Strokes</div>
<div style="position:absolute;left:275px;top:815px;width:45px;height:24px;background:#a6d8d5;border-radius:12.0px;"></div>
<div style="position:absolute;left:298px;top:815.5px;width:22px;height:22px;background:#4aafab;border-radius:50%;box-shadow:-1px 1.5px 2px rgba(0,0,0,.28);"></div>
<div id="t73" style="position:absolute;left:332.60px;top:822.05px;font-size:14px;line-height:14px;color:#474a4f;font-weight:400;letter-spacing:0.000px;white-space:nowrap;transform:scaleX(0.9981);transform-origin:0 0;">Team Panel</div>
<div style="position:absolute;left:275px;top:851px;width:45px;height:24px;background:#a6d8d5;border-radius:12.0px;"></div>
<div style="position:absolute;left:298px;top:851.5px;width:22px;height:22px;background:#4aafab;border-radius:50%;box-shadow:-1px 1.5px 2px rgba(0,0,0,.28);"></div>
<div id="t74" style="position:absolute;left:332.60px;top:857.95px;font-size:14px;line-height:14px;color:#474a4f;font-weight:400;letter-spacing:0.000px;white-space:nowrap;transform:scaleX(0.9735);transform-origin:0 0;">Line Managers Panel</div>
<div style="position:absolute;left:275px;top:900px;width:14px;height:13px;box-sizing:border-box;border:1px solid #c4c4c4;border-radius:2px;background:linear-gradient(180deg,#fff,#ededed);"></div>
<div id="t75" style="position:absolute;left:296.30px;top:898.15px;font-size:14px;line-height:14px;color:#474a4f;font-weight:400;letter-spacing:0.000px;white-space:nowrap;transform:scaleX(1.0240);transform-origin:0 0;">Work log minimum days</div>
<div id="t76" style="position:absolute;left:284.00px;top:935.97px;font-size:13.5px;line-height:13.5px;color:#8b8d96;font-weight:400;letter-spacing:0.000px;white-space:nowrap;transform:scaleX(1.0375);transform-origin:0 0;">Disabled</div>
<div style="position:absolute;left:284px;top:960px;width:162px;height:2px;background:#c2c2c2;"></div>
<div style="position:absolute;left:567px;top:716px;width:1071px;height:278px;background:#fff;border-radius:12px;box-shadow:0 1px 2px rgba(0,0,0,.3);"></div>
<div id="t77" style="position:absolute;left:589.40px;top:734.61px;font-size:18.3px;line-height:18.3px;color:#45aba8;font-weight:400;letter-spacing:0.000px;white-space:nowrap;transform:scaleX(1.1186);transform-origin:0 0;">Timesheet Approval Configuration</div>
<div style="position:absolute;left:608px;top:778px;width:422px;height:29px;box-sizing:border-box;border:1px solid #d7d0d4;border-radius:3px;background:#fff;"></div>
<div id="t78" style="position:absolute;left:616.00px;top:783.70px;font-size:15px;line-height:15px;color:#8a8a8a;font-weight:400;letter-spacing:0.000px;white-space:nowrap;">Employees (5)</div>
<svg style="position:absolute;left:998px;top:790px;" width="9.2" height="5.2" viewBox="0 0 9.2 5.2" fill="none"><path d="M0 0 H9.2 L4.6 5.2 Z" fill="#777"/></svg>
<svg style="position:absolute;left:1010px;top:788.8px;" width="9" height="8" viewBox="0 0 9 8" fill="none"><path d="M0.8 0.8 L8.2 7.2 M8.2 0.8 L0.8 7.2" stroke="#b5aec6" stroke-width="1.8"/></svg>
<div id="t79" style="position:absolute;left:608.30px;top:823.33px;font-size:10px;line-height:10px;color:#8d8c95;font-weight:400;letter-spacing:0.000px;white-space:nowrap;transform:scaleX(0.9934);transform-origin:0 0;">Pay Period</div>
<div id="t80" style="position:absolute;left:664.20px;top:823.33px;font-size:10px;line-height:10px;color:#e8566a;font-weight:400;letter-spacing:0.000px;white-space:nowrap;">*</div>
<div style="position:absolute;left:608px;top:837px;width:422px;height:29px;box-sizing:border-box;border:1px solid #d7d0d4;border-radius:3px;background:#fff;"></div>
<div id="t81" style="position:absolute;left:613.80px;top:843.90px;font-size:13px;line-height:13px;color:#222;font-weight:400;letter-spacing:0.000px;white-space:nowrap;transform:scaleX(1.0380);transform-origin:0 0;">Weekly</div>
<svg style="position:absolute;left:1012.0px;top:848.0px;" width="8" height="4.5" viewBox="0 0 8 4.5" fill="none"><path d="M0 0 H8 L4 4.5 Z" fill="#666"/></svg>
<div id="t82" style="position:absolute;left:608.30px;top:880.13px;font-size:10px;line-height:10px;color:#8d8c95;font-weight:400;letter-spacing:0.000px;white-space:nowrap;">Pay Type</div>
<div id="t83" style="position:absolute;left:657.30px;top:880.13px;font-size:10px;line-height:10px;color:#e8566a;font-weight:400;letter-spacing:0.000px;white-space:nowrap;">*</div>
<div style="position:absolute;left:608px;top:894px;width:422px;height:29px;box-sizing:border-box;border:1px solid #d7d0d4;border-radius:3px;background:#fff;"></div>
<div id="t84" style="position:absolute;left:613.80px;top:901.00px;font-size:13px;line-height:13px;color:#222;font-weight:400;letter-spacing:0.000px;white-space:nowrap;transform:scaleX(1.0485);transform-origin:0 0;">Hourly</div>
<svg style="position:absolute;left:1012.0px;top:905.0px;" width="8" height="4.5" viewBox="0 0 8 4.5" fill="none"><path d="M0 0 H8 L4 4.5 Z" fill="#666"/></svg>
<div id="t85" style="position:absolute;left:608.30px;top:937.24px;font-size:10px;line-height:10px;color:#8d8c95;font-weight:400;letter-spacing:0.000px;white-space:nowrap;transform:scaleX(1.0131);transform-origin:0 0;">Pay Period Start Day</div>
<div style="position:absolute;left:608px;top:951px;width:422px;height:29px;box-sizing:border-box;border:1px solid #d7d0d4;border-radius:3px;background:#fff;"></div>
<div id="t86" style="position:absolute;left:613.80px;top:957.80px;font-size:13px;line-height:13px;color:#222;font-weight:400;letter-spacing:0.000px;white-space:nowrap;">1</div>
<svg style="position:absolute;left:1012.0px;top:962.0px;" width="8" height="4.5" viewBox="0 0 8 4.5" fill="none"><path d="M0 0 H8 L4 4.5 Z" fill="#666"/></svg>
<div id="t87" style="position:absolute;left:1129.20px;top:766.63px;font-size:10px;line-height:10px;color:#8d8c95;font-weight:400;letter-spacing:0.000px;white-space:nowrap;transform:scaleX(1.0745);transform-origin:0 0;">Currency</div>
<div id="t88" style="position:absolute;left:1178.50px;top:766.63px;font-size:10px;line-height:10px;color:#e8566a;font-weight:400;letter-spacing:0.000px;white-space:nowrap;">*</div>
<div style="position:absolute;left:1129px;top:780px;width:422px;height:28px;box-sizing:border-box;border:1px solid #d7d0d4;border-radius:3px;background:#fff;"></div>
<div id="t89" style="position:absolute;left:1134.50px;top:786.00px;font-size:13px;line-height:13px;color:#222;font-weight:400;letter-spacing:0.000px;white-space:nowrap;transform:scaleX(1.0946);transform-origin:0 0;">Indian Rupee(&#8377;)</div>
<svg style="position:absolute;left:1533.5px;top:790.5px;" width="8" height="4.5" viewBox="0 0 8 4.5" fill="none"><path d="M0 0 H8 L4 4.5 Z" fill="#666"/></svg>
<div id="t90" style="position:absolute;left:1129.20px;top:823.74px;font-size:10px;line-height:10px;color:#8d8c95;font-weight:400;letter-spacing:0.000px;white-space:nowrap;transform:scaleX(1.0502);transform-origin:0 0;">Payrate</div>
<div id="t91" style="position:absolute;left:1171.00px;top:823.74px;font-size:10px;line-height:10px;color:#e8566a;font-weight:400;letter-spacing:0.000px;white-space:nowrap;">*</div>
<div style="position:absolute;left:1129px;top:836px;width:422px;height:29px;box-sizing:border-box;border:1px solid #d7d0d4;border-radius:3px;background:#fff;"></div>
<div id="t92" style="position:absolute;left:1134.50px;top:842.70px;font-size:13px;line-height:13px;color:#222;font-weight:400;letter-spacing:0.000px;white-space:nowrap;transform:scaleX(1.0025);transform-origin:0 0;">100000</div>
<div id="t93" style="position:absolute;left:1129.20px;top:879.74px;font-size:10px;line-height:10px;color:#8d8c95;font-weight:400;letter-spacing:0.000px;white-space:nowrap;transform:scaleX(1.0287);transform-origin:0 0;">Cut Off Period</div>
<div id="t94" style="position:absolute;left:1199.50px;top:879.74px;font-size:10px;line-height:10px;color:#e8566a;font-weight:400;letter-spacing:0.000px;white-space:nowrap;">*</div>
<div style="position:absolute;left:1129px;top:893px;width:422px;height:29px;box-sizing:border-box;border:1px solid #d7d0d4;border-radius:3px;background:#fff;"></div>
<div id="t95" style="position:absolute;left:1134.50px;top:899.80px;font-size:13px;line-height:13px;color:#222;font-weight:400;letter-spacing:0.000px;white-space:nowrap;transform:scaleX(1.0480);transform-origin:0 0;">Not Enabled</div>
<svg style="position:absolute;left:1533.5px;top:904.0px;" width="8" height="4.5" viewBox="0 0 8 4.5" fill="none"><path d="M0 0 H8 L4 4.5 Z" fill="#666"/></svg>
<div id="t96" style="position:absolute;left:1129.20px;top:936.74px;font-size:10px;line-height:10px;color:#8d8c95;font-weight:400;letter-spacing:0.000px;white-space:nowrap;">Pay Period End Day</div>
<div style="position:absolute;left:1129px;top:950px;width:422px;height:28px;box-sizing:border-box;border:1px solid #d7d0d4;border-radius:3px;background:#fff;"></div>
<div id="t97" style="position:absolute;left:1134.50px;top:956.40px;font-size:13px;line-height:13px;color:#222;font-weight:400;letter-spacing:0.000px;white-space:nowrap;">31</div>
<svg style="position:absolute;left:1533.5px;top:960.5px;" width="8" height="4.5" viewBox="0 0 8 4.5" fill="none"><path d="M0 0 H8 L4 4.5 Z" fill="#666"/></svg>
<div style="position:absolute;left:1556px;top:941px;width:69px;height:33px;background:#e5303e;border-radius:17px 5px 17px 17px;"></div>
<svg style="position:absolute;left:1563px;top:950px;" width="15" height="15" viewBox="0 0 15 15" fill="none"><circle cx="7.5" cy="7.5" r="6.4" stroke="#fff" stroke-width="1.3"/><path d="M5.5 5.8 A2 2 0 1 1 8 7.6 Q7.5 8 7.5 9 V9.3" stroke="#fff" stroke-width="1.3"/><circle cx="7.5" cy="11.3" r="0.8" fill="#fff"/></svg>
<div id="t98" style="position:absolute;left:1583.60px;top:950.65px;font-size:14px;line-height:14px;color:#fff;font-weight:700;letter-spacing:0.000px;white-space:nowrap;transform:scaleX(0.8898);transform-origin:0 0;">Help</div>
<div style="position:absolute;left:1642px;top:262px;width:10px;height:742px;background:#fff;"></div>
<div style="position:absolute;left:1638px;top:262px;width:4px;height:742px;background:#eef0f2;"></div>
<div style="position:absolute;left:1644px;top:497px;width:6px;height:492px;background:#c1bfc1;border-radius:3px;"></div>
<svg style="position:absolute;left:1643px;top:266px;" width="8" height="5" viewBox="0 0 8 5" fill="none"><path d="M4 0 L8 5 H0 Z" fill="#a9a9a9"/></svg>
<svg style="position:absolute;left:1643px;top:994px;" width="8" height="5" viewBox="0 0 8 5" fill="none"><path d="M0 0 H8 L4 5 Z" fill="#a9a9a9"/></svg>
<div style="position:absolute;left:1159px;top:580px;width:483px;height:131px;box-sizing:border-box;border:3px solid #000;"></div>
</div></div>
</div></div>
</body></html>
